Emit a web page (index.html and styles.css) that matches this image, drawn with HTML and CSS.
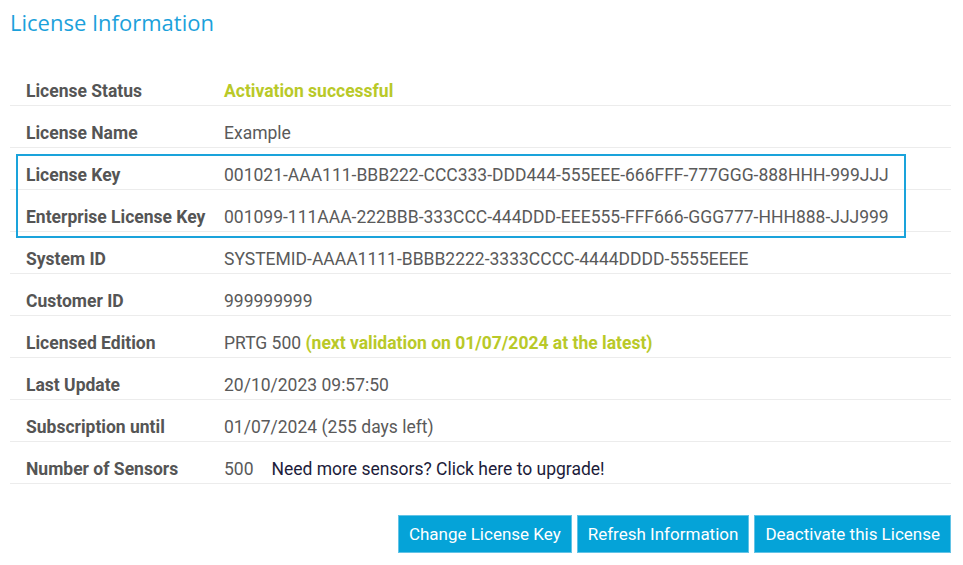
FILE: index.html
```html
<!DOCTYPE html>
<html>
<head>
<meta charset="utf-8">
<link rel="stylesheet" href="styles.css">
<title>License Information</title>
</head>
<body>
<div class="page">
  <h1 class="title">License Information</h1>
  <div class="table">
    <div class="row"><div class="label">License Status</div><div class="value ok">Activation successful</div></div>
    <div class="row"><div class="label">License Name</div><div class="value">Example</div></div>
    <div class="highlight">
      <div class="row"><div class="label">License Key</div><div class="value">001021-AAA111-BBB222-CCC333-DDD444-555EEE-666FFF-777GGG-888HHH-999JJJ</div></div>
      <div class="row"><div class="label">Enterprise License Key</div><div class="value">001099-111AAA-222BBB-333CCC-444DDD-EEE555-FFF666-GGG777-HHH888-JJJ999</div></div>
    </div>
    <div class="row"><div class="label">System ID</div><div class="value">SYSTEMID-AAAA1111-BBBB2222-3333CCCC-4444DDDD-5555EEEE</div></div>
    <div class="row"><div class="label">Customer ID</div><div class="value">999999999</div></div>
    <div class="row"><div class="label">Licensed Edition</div><div class="value">PRTG 500 <span class="ok">(next validation on 01/07/2024 at the latest)</span></div></div>
    <div class="row"><div class="label">Last Update</div><div class="value">20/10/2023 09:57:50</div></div>
    <div class="row"><div class="label">Subscription until</div><div class="value">01/07/2024 (255 days left)</div></div>
    <div class="row"><div class="label">Number of Sensors</div><div class="value">500<a class="upgrade" href="#">Need more sensors? Click here to upgrade!</a></div></div>
  </div>
  <div class="actions">
    <button class="btn">Change License Key</button>
    <button class="btn">Refresh Information</button>
    <button class="btn">Deactivate this License</button>
  </div>
</div>
</body>
</html>
```

FILE: styles.css
```css
html, body {
  margin: 0;
  padding: 0;
  background: #ffffff;
}
body {
  font-family: Roboto, "Liberation Sans", sans-serif;
  color: #555555;
}
.page {
  width: 941px;
  padding: 0 0 0 10px;
}
.title {
  margin: 0;
  padding-top: 7px;
  height: 64px;
  box-sizing: border-box;
  font-family: "Open Sans", Roboto, sans-serif;
  font-weight: 400;
  font-size: 22px;
  line-height: 30px;
  color: #1ba1db;
}
.table {
  display: flex;
  flex-direction: column;
}
.row {
  display: flex;
  height: 42px;
  box-sizing: border-box;
  padding-top: 17px;
  border-bottom: 1px solid #ececec;
  font-size: 17.5px;
  line-height: 20px;
}
.label {
  width: 198px;
  padding-left: 16px;
  font-weight: 700;
  color: #555555;
  white-space: nowrap;
}
.value {
  color: #5a5a5a;
  white-space: nowrap;
}
.ok {
  color: #b9c928;
  font-weight: 700;
}
.upgrade {
  margin-left: 18px;
  color: #1c1c3a;
  text-decoration: none;
}
.highlight {
  position: relative;
}
.highlight::after {
  content: "";
  position: absolute;
  top: 6px;
  left: 6px;
  right: 45px;
  bottom: -6px;
  border: 2px solid #1aa3db;
  pointer-events: none;
}
.actions {
  display: flex;
  justify-content: flex-end;
  gap: 5px;
  margin-top: 31px;
}
.btn {
  height: 38px;
  padding: 0 10px;
  background: #05a3d8;
  border: 1px solid #62c3e6;
  color: #ffffff;
  font-family: Roboto, "Liberation Sans", sans-serif;
  font-size: 17px;
  cursor: pointer;
}
```
